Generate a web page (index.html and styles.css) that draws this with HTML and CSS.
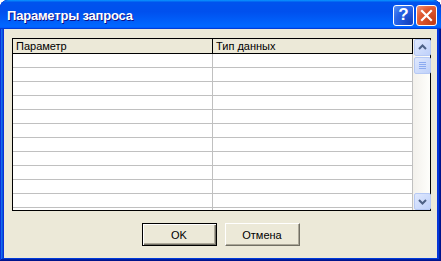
FILE: index.html
```html
<!DOCTYPE html>
<html lang="ru">
<head>
<meta charset="UTF-8" />
<title>Параметры запроса</title>
<link rel="stylesheet" href="styles.css">
</head>
<body>
<div class="window" role="dialog" aria-label="Параметры запроса">
  <div class="titlebar">
    <span class="title">Параметры запроса</span>
    <div class="controls">
      <button class="ctl help" aria-label="Справка">?</button>
      <button class="ctl close" aria-label="Закрыть">
        <svg width="13" height="13" viewBox="0 0 13 13"><path d="M2 2 L11 11 M11 2 L2 11" stroke="#fff" stroke-width="2.2" stroke-linecap="square"/></svg>
      </button>
    </div>
  </div>
  <div class="client">
    <div class="grid">
      <div class="grid-body">
        <div class="head">
          <div class="cell">Параметр</div>
          <div class="cell">Тип данных</div>
        </div>
        <div class="rows" id="rows"></div>
      </div>
      <div class="scrollbar">
        <div class="sb-btn">
          <svg width="15" height="15" viewBox="0 0 15 15"><path d="M4 9 L7.5 5.5 L11 9" fill="none" stroke="#4d6185" stroke-width="2"/></svg>
        </div>
        <div class="sb-thumb">
          <span></span><span></span><span></span><span></span>
        </div>
        <div class="sb-track"></div>
        <div class="sb-btn">
          <svg width="15" height="15" viewBox="0 0 15 15"><path d="M4 6 L7.5 9.5 L11 6" fill="none" stroke="#4d6185" stroke-width="2"/></svg>
        </div>
      </div>
    </div>
    <div class="actions">
      <button class="btn default">OK</button>
      <button class="btn">Отмена</button>
    </div>
  </div>
</div>

<script>
  // empty parameter rows
  const rows = document.getElementById('rows');
  for (let i = 0; i < 12; i++) {
    const row = document.createElement('div');
    row.className = 'row';
    row.innerHTML = '<div class="cell"></div><div class="cell"></div>';
    rows.appendChild(row);
  }
</script>
</body>
</html>
```

FILE: styles.css
```css
body {
  margin: 0;
  font-family: "Liberation Sans", Arial, sans-serif;
  font-size: 11px;
  background: #fff;
}
.window {
  width: 441px;
  height: 261px;
  box-sizing: border-box;
  padding: 0 4px 3px 4px;
  display: flex;
  flex-direction: column;
  background: #0831d9;
  border-radius: 8px 8px 0 0;
  box-shadow: inset -1px -1px #00138c, inset 1px 1px #0831d9, inset -2px -2px #001ea0, inset 2px 2px #166aee, inset -3px -3px #003bda, inset 3px 3px #0855dd;
  overflow: hidden;
}
.titlebar {
  height: 29px;
  margin: 0 -4px;
  padding: 0 4px 0 7px;
  display: flex;
  align-items: center;
  justify-content: space-between;
  border-radius: 8px 8px 0 0;
  background: linear-gradient(180deg, #0997ff, #0053ee 8%, #0050ee 40%, #06f 88%, #06f 93%, #005bff 95%, #003dd7 96%, #003dd7);
}
.title {
  color: #fff;
  font-weight: bold;
  font-size: 13px;
  letter-spacing: -0.2px;
  text-shadow: 1px 1px #0f1089;
  margin-top: 1px;
}
.controls {
  display: flex;
  gap: 2px;
  margin-top: 1px;
}
.ctl {
  width: 21px;
  height: 21px;
  padding: 0;
  border: 1px solid #fff;
  border-radius: 3px;
  display: flex;
  align-items: center;
  justify-content: center;
  color: #fff;
  font-family: "Liberation Sans", Arial, sans-serif;
  font-weight: bold;
  font-size: 17px;
}
.help {
  background: radial-gradient(circle at 85% 85%, #1542c0 0, #2662e6 60%, #5b93f5 100%);
}
.close {
  background: radial-gradient(circle at 85% 85%, #c23d19 0, #e0582f 60%, #f2957a 100%);
}
.client {
  flex: 1;
  background: #ece9d8;
  padding: 9px 0 0 8px;
  display: flex;
  flex-direction: column;
}
.grid {
  width: 419px;
  height: 173px;
  box-sizing: border-box;
  border: 1px solid #000;
  display: flex;
  background: #fff;
}
.grid-body {
  width: 400px;
  overflow: hidden;
}
.head {
  display: flex;
  height: 14px;
  background: #ece9d8;
  border-bottom: 1px solid #000;
}
.head .cell {
  border-right: 1px solid #000;
  line-height: 14px;
  padding-left: 3px;
}
.cell {
  width: 199px;
  box-sizing: content-box;
  border-right: 1px solid #c0c0c0;
}
.head .cell {
  width: 196px;
}
.row {
  display: flex;
  height: 13px;
  border-bottom: 1px solid #c0c0c0;
}
.scrollbar {
  width: 17px;
  display: flex;
  flex-direction: column;
  background: linear-gradient(90deg, #f3f1ec, #fefefb);
}
.sb-btn, .sb-thumb {
  height: 15px;
  margin: 0 0 0 1px;
  width: 15px;
  border: 1px solid #b6c9f4;
  border-radius: 2px;
  background: linear-gradient(135deg, #dfe8fd, #bfd1fa);
  display: flex;
  align-items: center;
  justify-content: center;
}
.sb-btn svg {
  display: block;
}
.sb-thumb {
  margin-top: 1px;
  flex-direction: column;
  gap: 1px;
}
.sb-thumb span {
  display: block;
  width: 7px;
  height: 1px;
  background: #8caaf0;
}
.sb-track {
  flex: 1;
}
.actions {
  display: flex;
  justify-content: center;
  gap: 8px;
  margin-top: 12px;
  padding-right: 8px;
}
.btn {
  width: 75px;
  height: 23px;
  font-family: "Liberation Sans", Arial, sans-serif;
  font-size: 11px;
  color: #000;
  background: #ece9d8;
  border: 1px solid;
  border-color: #fff #716f64 #716f64 #fff;
  box-shadow: inset -1px -1px #aca899;
  padding: 0;
}
.btn.default {
  border: 1px solid #000;
  box-shadow: inset 1px 1px #fff, inset -1px -1px #716f64, inset -2px -2px #aca899;
}
```
